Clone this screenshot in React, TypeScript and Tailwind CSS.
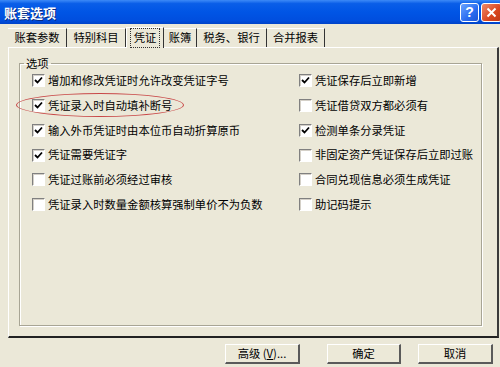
import React from "react";

const font = { fontFamily: '"Noto Sans CJK SC", "Noto Sans", sans-serif' };

function Check({ checked }: { checked: boolean }) {
  return (
    <div className="w-[13px] h-[13px] shrink-0 border-t border-l border-t-[#808080] border-l-[#808080] border-b border-r border-b-white border-r-white bg-white flex items-center justify-center shadow-[inset_1px_1px_0_#d4d0c8]">
      {checked && (
        <svg width="9" height="9" viewBox="0 0 9 9">
          <path d="M1 4 L3.5 6.5 L8 1.5" stroke="#000" strokeWidth="1.8" fill="none" />
        </svg>
      )}
    </div>
  );
}

function Row({ checked, label, circled }: { checked: boolean; label: string; circled?: boolean }) {
  return (
    <div className="relative h-[24.8px] flex items-center gap-[3px]">
      <Check checked={checked} />
      <span className="text-[11.3px] leading-none text-black whitespace-nowrap">{label}</span>
      {circled && (
        <div className="absolute left-[-16px] top-[0px] w-[168px] h-[24px] rounded-[50%] border border-[#c84848]" />
      )}
    </div>
  );
}

const left: [boolean, string][] = [
  [true, "增加和修改凭证时允许改变凭证字号"],
  [true, "凭证录入时自动填补断号"],
  [true, "输入外币凭证时由本位币自动折算原币"],
  [true, "凭证需要凭证字"],
  [false, "凭证过账前必须经过审核"],
  [false, "凭证录入时数量金额核算强制单价不为负数"],
];
const right: [boolean, string][] = [
  [true, "凭证保存后立即新增"],
  [false, "凭证借贷双方都必须有"],
  [true, "检测单条分录凭证"],
  [false, "非固定资产凭证保存后立即过账"],
  [false, "合同兑现信息必须生成凭证"],
  [false, "助记码提示"],
];

const tabs = [
  { t: "账套参数", w: "w-[59px]" },
  { t: "特别科目", w: "w-[59px]" },
  { t: "凭证", w: "w-[38px]", sel: true },
  { t: "账簿", w: "w-[33px]" },
  { t: "税务、银行", w: "w-[70px]" },
  { t: "合并报表", w: "w-[58px]" },
];

function Btn({ children, w }: { children: React.ReactNode; w: string }) {
  return (
    <div
      className={`${w} h-[20px] flex items-center justify-center text-[11.3px] text-black border-t border-l border-t-white border-l-white border-b-2 border-r-2 border-b-[#5a5a5a] border-r-[#5a5a5a] bg-[#ece9d8]`}
    >
      {children}
    </div>
  );
}

export default function App() {
  return (
    <div className="w-[500px] h-[367px] bg-[#ebe8d8] flex flex-col overflow-hidden" style={font}>
      {/* title bar */}
      <div className="h-[24px] shrink-0 flex items-center justify-between pl-[4px] pr-[0px] bg-[linear-gradient(to_bottom,#3d8af7_0%,#0a5ee8_15%,#0055e5_50%,#004ede_85%,#0043c8_100%)]">
        <span className="text-white font-bold text-[13px] leading-none [text-shadow:1px_1px_0_#0a2a80]">账套选项</span>
        <div className="flex items-center gap-[2px] mr-[-2px]">
          <div className="w-[19px] h-[19px] rounded-[3px] border border-white bg-[linear-gradient(135deg,#6aa4ff,#2a6cf0_60%,#1d55d6)] flex items-center justify-center">
            <span className="text-white font-bold text-[14px] leading-none" style={{ fontFamily: '"Liberation Sans", sans-serif' }}>?</span>
          </div>
          <div className="w-[21px] h-[19px] rounded-[3px] border border-white bg-[linear-gradient(135deg,#f08a6a,#d8461f_60%,#c03a18)] flex items-center justify-center">
            <svg width="11" height="11" viewBox="0 0 11 11">
              <path d="M1.5 1.5 L9.5 9.5 M9.5 1.5 L1.5 9.5" stroke="#fff" strokeWidth="2" />
            </svg>
          </div>
        </div>
      </div>

      {/* body */}
      <div className="flex-1 flex flex-col pl-[8px] pt-[4px]">
        {/* tabs */}
        <div className="h-[19px] flex items-end relative z-10">
          {tabs.map((tab) =>
            tab.sel ? (
              <div
                key={tab.t}
                className={`${tab.w} h-[21px] -mb-px bg-[#ebe8d8] border-t border-l border-t-white border-l-white border-r border-r-[#333] flex items-center justify-center`}
              >
                <span className="text-[11.3px] leading-none px-[3px] py-[3px] outline outline-1 outline-dotted outline-[#333] text-black">
                  {tab.t}
                </span>
              </div>
            ) : (
              <div
                key={tab.t}
                className={`${tab.w} h-[19px] border-t border-t-white border-r border-r-[#333] flex items-center justify-center`}
              >
                <span className="text-[11.3px] leading-none text-black">{tab.t}</span>
              </div>
            )
          )}
        </div>

        {/* panel */}
        <div className="w-[491px] h-[291px] border-t border-l border-t-white border-l-white border-r-2 border-b-2 border-r-[#3a3a3a] border-b-[#222] pl-[10px] pt-[10px]">
          <fieldset className="w-[463px] h-[268px] border border-[#a8a595] shadow-[1px_1px_0_#fff,inset_1px_1px_0_#fff] rounded-none px-0 pt-0 m-0">
            <legend className="ml-[4px] px-[2px] text-[11.3px] leading-none text-black">选项</legend>
            <div className="grid grid-cols-[267px_1fr] pl-[12px] -mt-[1px]">
              <div className="flex flex-col">
                {left.map(([c, l], i) => (
                  <Row key={l} checked={c} label={l} circled={i === 1} />
                ))}
              </div>
              <div className="flex flex-col">
                {right.map(([c, l]) => (
                  <Row key={l} checked={c} label={l} />
                ))}
              </div>
            </div>
          </fieldset>
        </div>

        {/* buttons */}
        <div className="flex pl-[217px] pt-[6px]">
          <Btn w="w-[75px]">
            <span>
              高级 (<span className="underline">V</span>)...
            </span>
          </Btn>
          <div className="w-[27px]" />
          <Btn w="w-[74px]">确定</Btn>
          <div className="w-[17px]" />
          <Btn w="w-[75px]">取消</Btn>
        </div>
      </div>
    </div>
  );
}
